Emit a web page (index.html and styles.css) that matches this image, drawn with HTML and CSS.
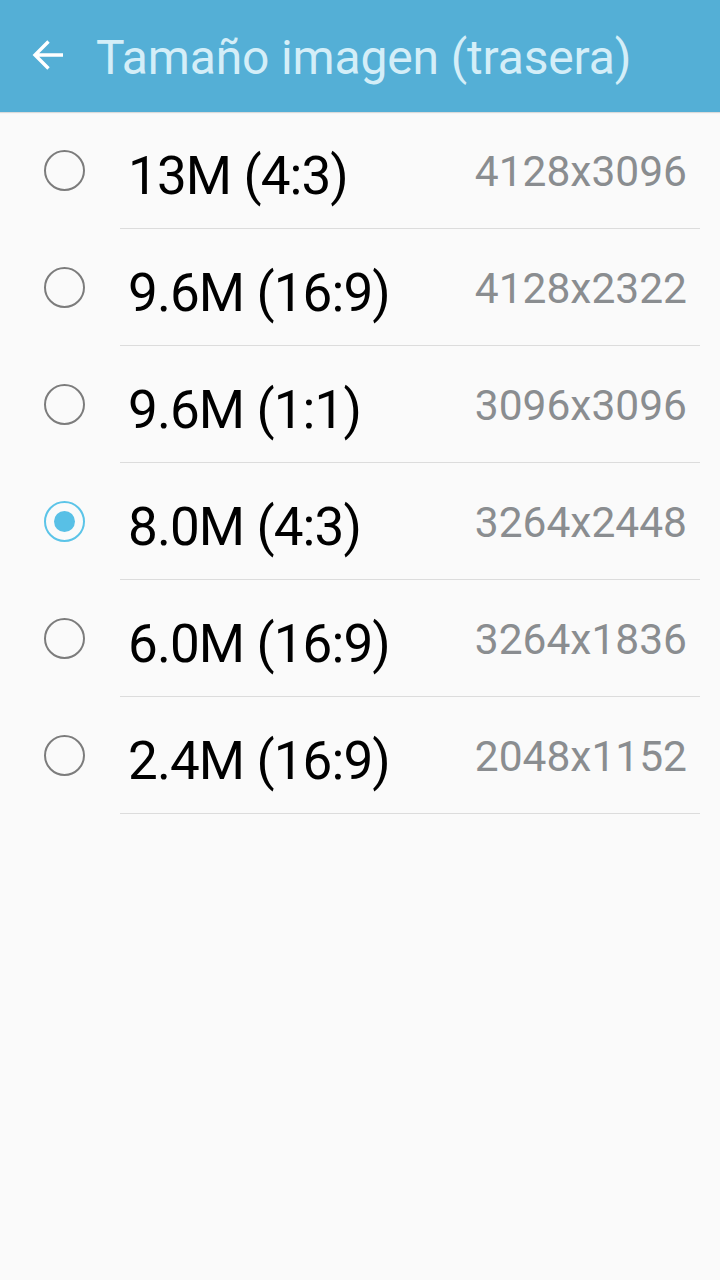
FILE: index.html
```html
<!DOCTYPE html>
<html>
<head>
<meta charset="utf-8">
<link rel="stylesheet" href="styles.css">
</head>
<body>
<header class="appbar">
  <svg class="back" width="34" height="34" viewBox="0 0 34 34"><path d="M31 16H3.5M16.5 2.5L3 16L16.5 29.5" fill="none" stroke="#ffffff" stroke-width="3.4"/></svg>
  <h1 class="title">Tamaño imagen (trasera)</h1>
</header>
<ul class="list">
  <li class="row"><span class="radio"></span><div class="content"><span class="label">13M (4:3)</span><span class="value">4128x3096</span></div></li>
  <li class="row"><span class="radio"></span><div class="content"><span class="label">9.6M (16:9)</span><span class="value">4128x2322</span></div></li>
  <li class="row"><span class="radio"></span><div class="content"><span class="label">9.6M (1:1)</span><span class="value">3096x3096</span></div></li>
  <li class="row"><span class="radio checked"></span><div class="content"><span class="label">8.0M (4:3)</span><span class="value">3264x2448</span></div></li>
  <li class="row"><span class="radio"></span><div class="content"><span class="label">6.0M (16:9)</span><span class="value">3264x1836</span></div></li>
  <li class="row"><span class="radio"></span><div class="content"><span class="label">2.4M (16:9)</span><span class="value">2048x1152</span></div></li>
</ul>
</body>
</html>
```
FILE: styles.css
```css
html, body {
  margin: 0;
  padding: 0;
  background: #fafafa;
  font-family: Roboto, "Noto Sans", sans-serif;
}
.appbar {
  height: 112px;
  background: #54afd6;
  display: flex;
  align-items: center;
  box-shadow: 0 1px 1px rgba(0,0,0,0.12);
  position: relative;
}
.back {
  margin-left: 32px;
  flex: none;
}
.title {
  margin: 0 0 0 30px;
  font-size: 48px;
  font-weight: 400;
  letter-spacing: -0.15px;
  color: #d4eef8;
  line-height: 56px;
  position: relative;
  top: 2px;
}
.list {
  list-style: none;
  margin: 0;
  padding: 0;
}
.row {
  display: flex;
  height: 117px;
}
.radio {
  flex: none;
  border: 2px solid #7c7c7c;
  border-radius: 50%;
  margin: 38px 0 0 44px;
  box-sizing: border-box;
  width: 41px;
  height: 41px;
  position: relative;
}
.radio.checked {
  border-color: #5bc4e8;
}
.radio.checked::after {
  content: "";
  position: absolute;
  left: 8px;
  top: 8px;
  width: 21px;
  height: 21px;
  border-radius: 50%;
  background: #58c0e6;
}
.content {
  flex: 1;
  margin-left: 35px;
  margin-right: 20px;
  border-bottom: 1px solid #dcdcdc;
  display: flex;
  justify-content: space-between;
  align-items: flex-start;
  padding-right: 13px;
}
.label {
  font-size: 53px;
  letter-spacing: -0.9px;
  line-height: 60px;
  color: #000;
  margin-top: 34px;
  margin-left: 8px;
}
.value {
  font-size: 42.5px;
  line-height: 50px;
  color: #8a8d90;
  margin-top: 35px;
}
```
